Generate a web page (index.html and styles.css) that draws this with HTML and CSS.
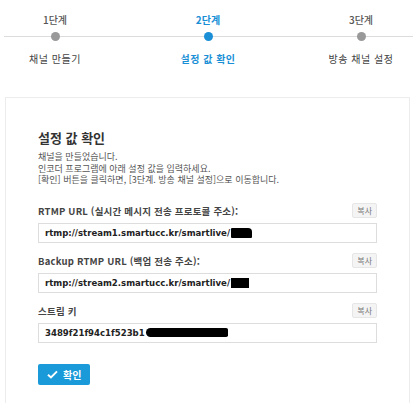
FILE: index.html
```html
<!DOCTYPE html>
<html lang="ko">
<head>
<meta charset="utf-8">
<link rel="stylesheet" href="styles.css">
</head>
<body>
<div class="steps">
  <div class="steps-line"></div>
  <div class="step">
    <div class="step-num">1단계</div>
    <div class="step-dot"></div>
    <div class="step-label">채널 만들기</div>
  </div>
  <div class="step active">
    <div class="step-num">2단계</div>
    <div class="step-dot"></div>
    <div class="step-label">설정 값 확인</div>
  </div>
  <div class="step">
    <div class="step-num">3단계</div>
    <div class="step-dot"></div>
    <div class="step-label">방송 채널 설정</div>
  </div>
</div>

<div class="card">
  <h2 class="title">설정 값 확인</h2>
  <p class="desc">채널을 만들었습니다.<br>인코더 프로그램에 아래 설정 값을 입력하세요.<br>[확인] 버튼을 클릭하면, [3단계. 방송 채널 설정]으로 이동합니다.</p>

  <div class="field">
    <div class="field-head">
      <span class="field-label">RTMP URL (실시간 메시지 전송 프로토콜 주소):</span>
      <span class="copy">복사</span>
    </div>
    <div class="field-input">rtmp://stream1.smartucc.kr/smartlive/<span class="redact r1"></span></div>
  </div>

  <div class="field">
    <div class="field-head">
      <span class="field-label">Backup RTMP URL (백업 전송 주소):</span>
      <span class="copy">복사</span>
    </div>
    <div class="field-input">rtmp://stream2.smartucc.kr/smartlive/<span class="redact r2"></span></div>
  </div>

  <div class="field">
    <div class="field-head">
      <span class="field-label">스트림 키</span>
      <span class="copy">복사</span>
    </div>
    <div class="field-input">3489f21f94c1f523b1<span class="redact r3"></span></div>
  </div>

  <button class="confirm"><svg class="check" viewBox="0 0 12 10" width="11" height="9"><path d="M1 5.2 L4.3 8.3 L11 1.5" fill="none" stroke="#fff" stroke-width="2.2"/></svg>확인</button>
</div>
</body>
</html>
```
FILE: styles.css
```css
* { box-sizing: border-box; }
html, body { margin: 0; padding: 0; background: #fff; }
body {
  font-family: "Noto Sans CJK KR", "Liberation Sans", sans-serif;
  color: #333;
  width: 417px;
  overflow: hidden;
}
.steps {
  position: relative;
  display: flex;
  gap: 43px;
  padding-top: 13px;
  height: 97px;
}
.steps-line {
  position: absolute;
  left: 4px;
  right: 4px;
  top: 36px;
  height: 1px;
  background: #dcdcdc;
}
.step {
  width: 110px;
  display: flex;
  flex-direction: column;
  align-items: center;
  position: relative;
}
.step-num {
  font-size: 10px;
  line-height: 14px;
  color: #555;
  font-weight: 500;
}
.step-dot {
  width: 9px;
  height: 9px;
  border-radius: 50%;
  background: #999;
  margin-top: 5px;
}
.step-label {
  margin-top: 11px;
  font-size: 10px;
  line-height: 14px;
  color: #444;
  letter-spacing: 0.5px;
}
.step.active .step-num,
.step.active .step-label { color: #1a8fd6; font-weight: 700; }
.step.active .step-dot { background: #1a8fd6; }

.card {
  margin: 0 7px 0 5px;
  border: 1px solid #ececec;
  border-bottom: none;
  padding: 31px 32px 20px 32px;
  min-height: 310px;
}
.title {
  margin: 0;
  font-size: 13px;
  line-height: 17px;
  font-weight: 700;
  color: #333;
}
.desc {
  margin: 5px 0 0 0;
  font-size: 9px;
  line-height: 11.5px;
  color: #555;
}
.field { margin-top: 17px; }
.field + .field { margin-top: 10px; }
.field-head {
  display: flex;
  justify-content: space-between;
  align-items: center;
  height: 16px;
}
.field-label {
  font-size: 9.5px;
  font-weight: 700;
  color: #444;
  letter-spacing: 0.2px;
}
.copy {
  font-size: 8px;
  line-height: 13px;
  padding: 0 4px;
  color: #777;
  background: #f4f4f4;
  border: 1px solid #e6e6e6;
  border-radius: 2px;
}
.field-input {
  margin-top: 4px;
  height: 20px;
  border: 1px solid #dddddd;
  padding: 0 6px;
  font-family: "DejaVu Sans Condensed", "DejaVu Sans", sans-serif;
  font-stretch: condensed;
  font-size: 9.5px;
  font-weight: 700;
  line-height: 18px;
  color: #222;
  white-space: nowrap;
  display: flex;
  align-items: center;
}
.redact {
  display: inline-block;
  background: #000;
  height: 10px;
  margin-left: 1px;
}
.r1 { width: 21px; border-radius: 1px 4px 1px 1px; }
.r2 { width: 18px; }
.r3 { width: 82px; height: 9px; border-radius: 5px 2px 2px 5px; }
.confirm {
  margin-top: 21px;
  display: flex;
  align-items: center;
  gap: 5px;
  height: 21px;
  width: 52px;
  padding: 0 0 0 9px;
  border: none;
  border-radius: 2px;
  background: #1a9ad9;
  color: #fff;
  font-family: "Noto Sans CJK KR", sans-serif;
  font-size: 10px;
  font-weight: 700;
}
.check { display: block; }
```
